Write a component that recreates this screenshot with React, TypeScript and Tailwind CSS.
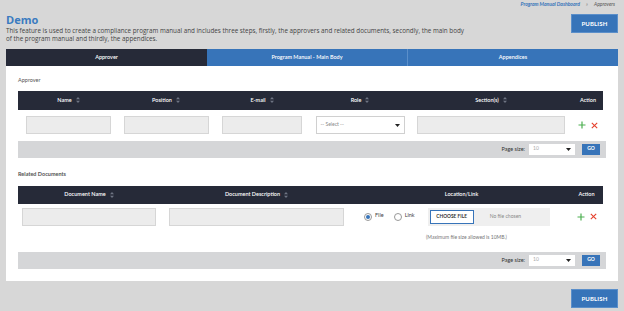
import React from "react";

const Sort = () => (
  <svg width="4" height="6" viewBox="0 0 4 6" className="ml-[4px] inline-block">
    <path d="M2 0 L4 2.2 L0 2.2 Z" fill="#6f7584" />
    <path d="M2 6 L4 3.8 L0 3.8 Z" fill="#6f7584" />
  </svg>
);

const Caret = () => (
  <svg width="5" height="3" viewBox="0 0 5 3">
    <path d="M0 0 L5 0 L2.5 3 Z" fill="#222" />
  </svg>
);

const Actions = () => (
  <div className="flex items-center justify-center gap-[5px]">
    <svg width="8" height="8" viewBox="0 0 8 8">
      <path d="M4 0.5 V7.5 M0.5 4 H7.5" stroke="#4caf50" strokeWidth="1.2" />
    </svg>
    <svg width="7" height="7" viewBox="0 0 7 7">
      <path d="M0.8 0.8 L6.2 6.2 M6.2 0.8 L0.8 6.2" stroke="#e5412d" strokeWidth="1.1" />
    </svg>
  </div>
);

const Input = ({ w }: { w: string }) => (
  <div className={`${w} h-[18px] bg-[#ececec] border border-[#d6d6d6]`} />
);

const Head = ({ label, sort = true }: { label: string; sort?: boolean }) => (
  <div className="flex items-center justify-center text-white font-semibold text-[5.5px]">
    {label}
    {sort && <Sort />}
  </div>
);

const Footer = () => (
  <div className="h-[17px] bg-[#d5d6d8] flex items-center justify-end pr-[6px]">
    <span className="text-[5.5px] text-[#333] mr-[4px]">Page size:</span>
    <div className="w-[46px] h-[11px] bg-white flex items-center justify-between px-[4px]">
      <span className="text-[5px] text-[#aaa]">10</span>
      <Caret />
    </div>
    <div className="ml-[7px] w-[18px] h-[11px] bg-[#3774b9] text-white text-[5px] font-bold flex items-center justify-center">
      GO
    </div>
  </div>
);

const Radio = ({ on, label }: { on?: boolean; label: string }) => (
  <div className="flex items-center gap-[3px]">
    <div className="w-[8px] h-[8px] rounded-full border border-[#999] bg-white flex items-center justify-center">
      {on && <div className="w-[4px] h-[4px] rounded-full bg-[#3774b9]" />}
    </div>
    <span className="text-[5.5px] text-[#444] -mt-[2px]">{label}</span>
  </div>
);

const Publish = () => (
  <div className="w-[47px] h-[19px] bg-[#3774b9] border border-[#5b8fca] text-white text-[6px] font-bold flex items-center justify-center tracking-wide">
    PUBLISH
  </div>
);

export default function App() {
  return (
    <div className="w-[624px] h-[311px] bg-[#d7d7d7] overflow-hidden font-['Lato',sans-serif]">
      <div className="px-[6px] pt-[1px]">
        {/* Breadcrumb */}
        <div className="flex justify-end items-center gap-[6px] pr-[3px] text-[5px] italic">
          <span className="text-[#3774b9] font-bold">Program Manual Dashboard</span>
          <span className="text-[#888]">»</span>
          <span className="text-[#555]">Approvers</span>
        </div>

        {/* Title + publish */}
        <div className="flex justify-between items-start mt-[4px]">
          <div>
            <div className="text-[#3a7bc0] font-bold text-[11px] leading-[14px] font-['Open_Sans',sans-serif]">Demo</div>
            <p className="text-[6.3px] leading-[8.5px] text-[#444] w-[462px] font-['Open_Sans',sans-serif]">
              This feature is used to create a compliance program manual and includes three steps, firstly, the approvers and related documents, secondly, the main body of the program manual and thirdly, the appendices.
            </p>
          </div>
          <div className="mt-[1px]">
            <Publish />
          </div>
        </div>

        {/* Tabs */}
        <div className="mt-[5px] flex h-[17px] text-white text-[5.5px] font-semibold">
          <div className="w-[201px] bg-[#262a38] flex items-center justify-center">Approver</div>
          <div className="w-[201px] bg-[#3774b9] flex items-center justify-center border-r border-[#5b8fca]">
            Program Manual - Main Body
          </div>
          <div className="flex-1 bg-[#3774b9] flex items-center justify-center">Appendices</div>
        </div>

        {/* Panel */}
        <div className="bg-white px-[12px] pt-[10px] pb-[12px]">
          <div className="text-[5.5px] text-[#555] h-[8px]">Approver</div>
          <div className="mt-[7px] grid grid-cols-[101px_94px_98px_98px_164px_30px]">
            <div className="col-span-6 grid grid-cols-subgrid h-[19px] bg-[#262a38] items-center">
              <Head label="Name" />
              <Head label="Position" />
              <Head label="E-mail" />
              <Head label="Role" />
              <Head label="Section(s)" />
              <Head label="Action" sort={false} />
            </div>
            <div className="col-span-6 grid grid-cols-subgrid h-[31px] items-center justify-items-center">
              <Input w="w-[85px]" />
              <Input w="w-[85px]" />
              <Input w="w-[80px]" />
              <div className="w-[89px] h-[18px] bg-white border border-[#d0d0d0] flex items-center justify-between px-[4px]">
                <span className="text-[5px] text-[#888]">-- Select --</span>
                <Caret />
              </div>
              <Input w="w-[148px]" />
              <Actions />
            </div>
          </div>
          <Footer />

          <div className="mt-[12px] text-[5.5px] text-[#555] font-bold h-[8px]">Related Documents</div>
          <div className="mt-[8px] grid grid-cols-[142px_193px_217px_33px]">
            <div className="col-span-4 grid grid-cols-subgrid h-[18px] bg-[#262a38] items-center">
              <Head label="Document Name" />
              <Head label="Document Description" />
              <Head label="Location/Link" sort={false} />
              <Head label="Action" sort={false} />
            </div>
            <div className="col-span-4 grid grid-cols-subgrid h-[26px] items-center">
              <div className="pl-[4px]">
                <Input w="w-[134px]" />
              </div>
              <div className="pl-[9px]">
                <Input w="w-[175px]" />
              </div>
              <div className="flex items-center pl-[11px]">
                <Radio on label="File" />
                <div className="ml-[10px]">
                  <Radio label="Link" />
                </div>
                <div className="ml-[13px] w-[122px] h-[18px] bg-[#efefef] flex items-center pl-[2px]">
                  <div className="w-[44px] h-[14px] bg-white border-[1.5px] border-[#3774b9] flex items-center justify-center text-[4.8px] font-bold text-[#333]">
                    CHOOSE FILE
                  </div>
                  <span className="ml-[16px] text-[5px] text-[#888]">No file chosen</span>
                </div>
              </div>
              <Actions />
            </div>
            <div className="col-span-4 grid grid-cols-subgrid h-[22px]">
              <div />
              <div />
              <div className="text-[5px] text-[#777] text-center pt-[4px] pl-[10px]">
                (Maximum file size allowed is 10MB.)
              </div>
            </div>
          </div>
          <Footer />
        </div>

        <div className="flex justify-end mt-[8px]">
          <Publish />
        </div>
      </div>
    </div>
  );
}
